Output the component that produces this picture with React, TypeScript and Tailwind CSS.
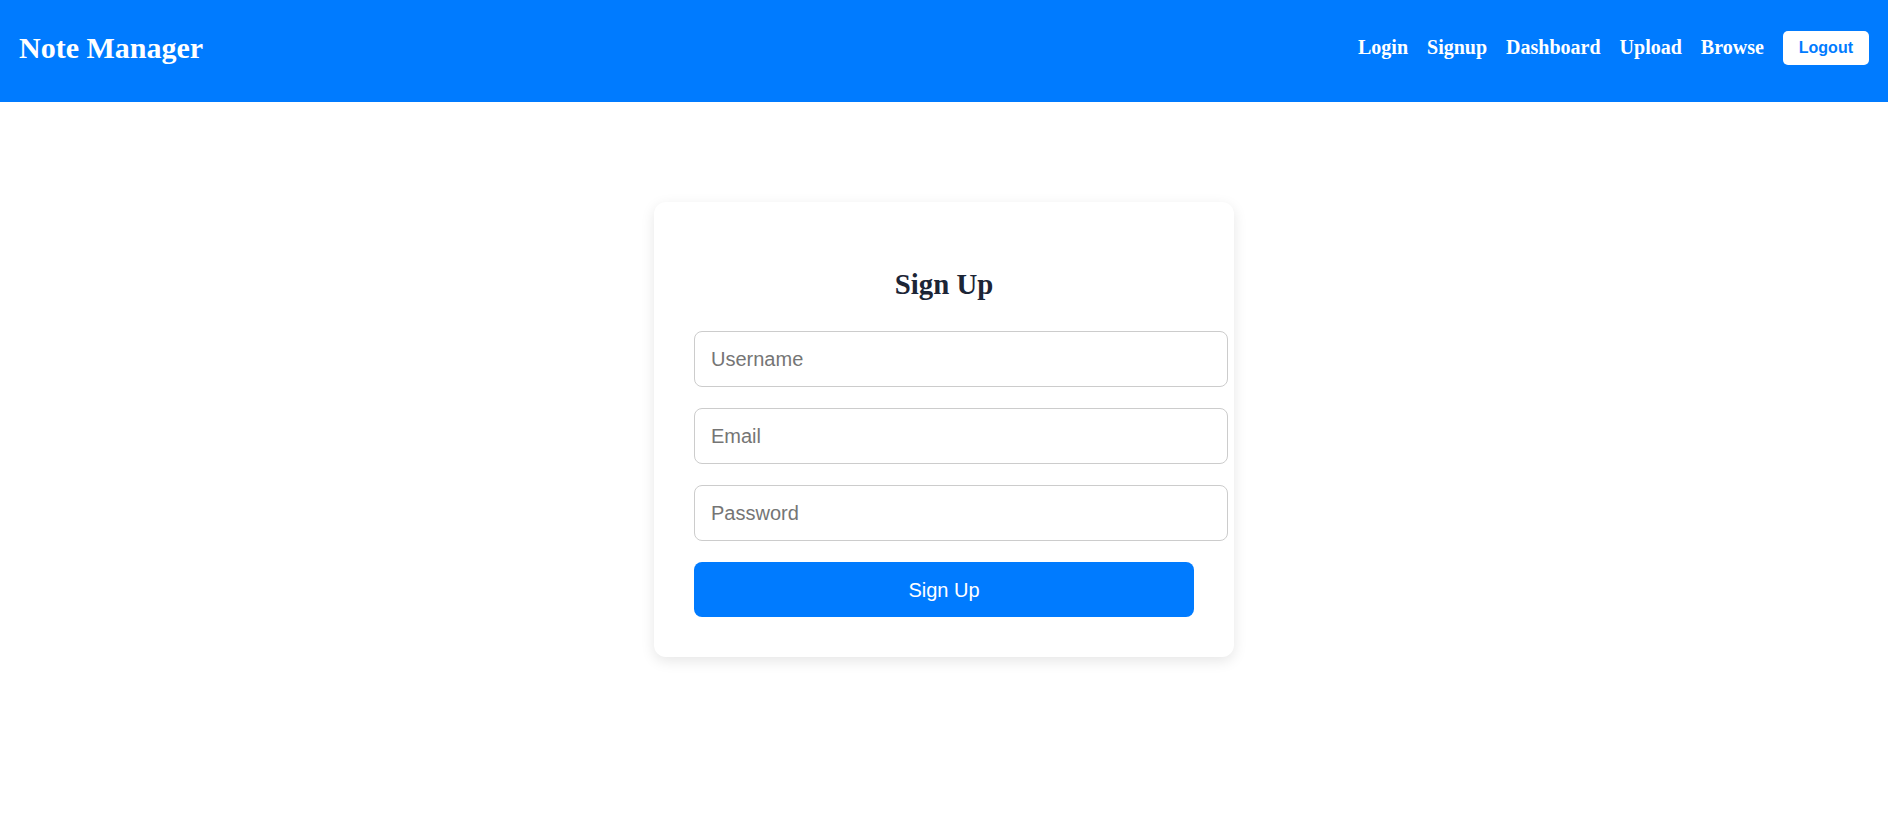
import React, { useState } from 'react';

const navLinks = ['Login', 'Signup', 'Dashboard', 'Upload', 'Browse'];

const Navbar: React.FC = () => (
  <header className="h-[102px] bg-[#007bff] flex items-center justify-between px-[19px] pb-[7px]">
    <h1 className="text-[30px] font-bold text-white leading-[34px] font-['Liberation_Serif',serif]">Note Manager</h1>
    <nav className="flex items-center gap-[19px]">
      {navLinks.map(link => (
        <a key={link} href="#" className="text-[20px] font-bold text-white leading-[23px] font-['Liberation_Serif',serif]">
          {link}
        </a>
      ))}
      <button className="bg-white text-[#007bff] font-bold text-[16px] leading-[18px] px-4 py-2 rounded-[5px] font-['Liberation_Sans',sans-serif]">
        Logout
      </button>
    </nav>
  </header>
);

export default function App() {
  const [form, setForm] = useState({ username: '', email: '', password: '' });

  const update = (key: keyof typeof form) => (e: React.ChangeEvent<HTMLInputElement>) =>
    setForm(prev => ({ ...prev, [key]: e.target.value }));

  const inputClass =
    "box-content w-full h-[22px] px-4 py-4 border border-[#cccccc] rounded-[8px] text-[20px] leading-[22px] text-[#333] placeholder:text-[#757575] outline-none font-['Liberation_Sans',sans-serif]";

  return (
    <div className="min-h-screen bg-white">
      <Navbar />
      <main className="flex justify-center pt-[100px]">
        <div className="w-[580px] bg-white rounded-[12px] p-10 shadow-[0_4px_14px_rgba(0,0,0,0.1)]">
          <h2 className="mt-[26px] mb-[30px] text-center text-[28.8px] leading-[33px] font-bold text-[#1c2536] font-['Liberation_Serif',serif]">
            Sign Up
          </h2>
          <form className="flex flex-col gap-[21px]" onSubmit={e => e.preventDefault()}>
            <input type="text" placeholder="Username" value={form.username} onChange={update('username')} className={inputClass} />
            <input type="email" placeholder="Email" value={form.email} onChange={update('email')} className={inputClass} />
            <input type="password" placeholder="Password" value={form.password} onChange={update('password')} className={inputClass} />
            <button type="submit" className="w-full h-[55px] bg-[#007bff] text-white text-[20px] rounded-[8px] font-['Liberation_Sans',sans-serif]">
              Sign Up
            </button>
          </form>
        </div>
      </main>
    </div>
  );
}
